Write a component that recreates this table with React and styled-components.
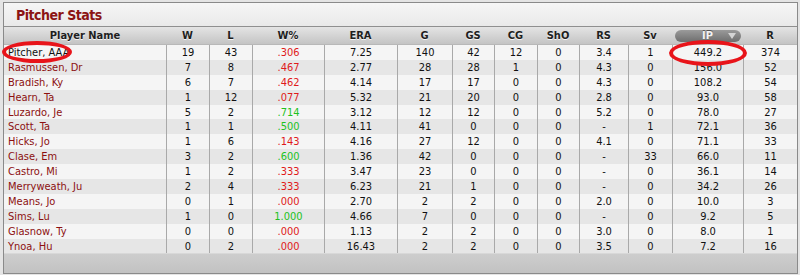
import React from 'react';
import styled, { createGlobalStyle } from 'styled-components';

const GlobalStyle = createGlobalStyle`
  html, body { margin: 0; padding: 0; background: #e4e4e4; }
  body { font-family: "DejaVu Sans Condensed", "DejaVu Sans", sans-serif; }
`;

const COLS = '162px 43px 43px 72px 73px 55px 42px 43px 42px 49px 44px 71px 54px';

const pitchers = [
  ['Pitcher, AAA', 19, 43, '.306', '7.25', 140, 42, 12, 0, '3.4', 1, '449.2', 374],
  ['Rasmussen, Dr', 7, 8, '.467', '2.77', 28, 28, 1, 0, '4.3', 0, '156.0', 52],
  ['Bradish, Ky', 6, 7, '.462', '4.14', 17, 17, 0, 0, '4.3', 0, '108.2', 54],
  ['Hearn, Ta', 1, 12, '.077', '5.32', 21, 20, 0, 0, '2.8', 0, '93.0', 58],
  ['Luzardo, Je', 5, 2, '.714', '3.12', 12, 12, 0, 0, '5.2', 0, '78.0', 27],
  ['Scott, Ta', 1, 1, '.500', '4.11', 41, 0, 0, 0, '-', 1, '72.1', 36],
  ['Hicks, Jo', 1, 6, '.143', '4.16', 27, 12, 0, 0, '4.1', 0, '71.1', 33],
  ['Clase, Em', 3, 2, '.600', '1.36', 42, 0, 0, 0, '-', 33, '66.0', 11],
  ['Castro, Mi', 1, 2, '.333', '3.47', 23, 0, 0, 0, '-', 0, '36.1', 14],
  ['Merryweath, Ju', 2, 4, '.333', '6.23', 21, 1, 0, 0, '-', 0, '34.2', 26],
  ['Means, Jo', 0, 1, '.000', '2.70', 2, 2, 0, 0, '2.0', 0, '10.0', 3],
  ['Sims, Lu', 1, 0, '1.000', '4.66', 7, 0, 0, 0, '-', 0, '9.2', 5],
  ['Glasnow, Ty', 0, 0, '.000', '1.13', 2, 2, 0, 0, '3.0', 0, '8.0', 1],
  ['Ynoa, Hu', 0, 2, '.000', '16.43', 2, 2, 0, 0, '3.5', 0, '7.2', 16],
];

const headers = ['Player Name', 'W', 'L', 'W%', 'ERA', 'G', 'GS', 'CG', 'ShO', 'RS', 'Sv', 'IP', 'R'];

const Page = styled.div`
  padding: 2px 2px 3px 3px;
`;

const Panel = styled.div`
  position: relative;
  border: 1px solid #8a8a8a;
  background: #f0f0f0;
`;

const TitleBar = styled.div`
  height: 23px;
  display: flex;
  align-items: center;
  padding-left: 12px;
  background: linear-gradient(#f6f6f6, #e9e9e9);
  border-bottom: 1px solid #8f8f8f;
`;

const Title = styled.h2`
  margin: 0;
  font-size: 14px;
  font-weight: bold;
  letter-spacing: -0.5px;
  color: #8c1414;
`;

const Grid = styled.div`
  display: grid;
  grid-template-columns: ${COLS};
`;

const HeadRow = styled(Grid)`
  height: 17px;
  background: linear-gradient(#e4e4e4, #c4c4c4);
  border-bottom: 1px solid #b8b8b8;
`;

const HeadCell = styled.div`
  display: flex;
  align-items: center;
  justify-content: center;
  font-size: 11px;
  font-weight: bold;
  color: #1e1e1e;
  text-shadow: 0 1px 0 #f4f4f4;
`;

const SortPill = styled.div`
  position: relative;
  width: 66px;
  height: 12px;
  border-radius: 6px;
  background: linear-gradient(#9a9a9a, #6e6e6e);
  display: flex;
  align-items: center;
  justify-content: center;
  color: #f2f2f2;
  text-shadow: 0 -1px 0 #555;
  &::after {
    content: '';
    position: absolute;
    right: 5px;
    top: 3px;
    border-left: 4px solid transparent;
    border-right: 4px solid transparent;
    border-top: 6px solid #d4d4d4;
  }
`;

const Row = styled(Grid)`
  height: 14.9px;
  background: ${p => (p.$odd ? '#e6e6e6' : '#f5f5f5')};
`;

const Cell = styled.div`
  display: flex;
  align-items: center;
  justify-content: ${p => (p.$left ? 'flex-start' : 'center')};
  padding-left: ${p => (p.$left ? '4px' : '0')};
  font-size: 11px;
  color: ${p => p.$color || '#111'};
  border-left: ${p => (p.$left ? 'none' : '1px solid #a9a9a9')};
  white-space: nowrap;
`;

const Footer = styled.div`
  height: 19px;
  background: linear-gradient(#cdcdcd, #c2c2c2);
  border-top: 1px solid #d8d8d8;
`;

const Ring = styled.div`
  position: absolute;
  left: ${p => p.$x}px;
  top: ${p => p.$y}px;
  width: ${p => p.$w}px;
  height: ${p => p.$h}px;
  border: 4px solid #e8141a;
  border-radius: 50%;
  box-sizing: border-box;
  pointer-events: none;
`;

const pctColor = v => (parseFloat(v) >= 0.5 ? '#1ec21e' : '#e01a1a');

export default function App() {
  return (
    <Page>
      <GlobalStyle />
      <Panel>
        <TitleBar>
          <Title>Pitcher Stats</Title>
        </TitleBar>
        <HeadRow>
          {headers.map(h => (
            <HeadCell key={h}>{h === 'IP' ? <SortPill>IP</SortPill> : h}</HeadCell>
          ))}
        </HeadRow>
        {pitchers.map((r, i) => (
          <Row key={r[0]} $odd={i % 2 === 1}>
            {r.map((v, j) => (
              <Cell
                key={j}
                $left={j === 0}
                $color={j === 0 ? (i === 0 ? '#111' : '#8c1010') : j === 3 ? pctColor(v) : undefined}
              >
                {v}
              </Cell>
            ))}
          </Row>
        ))}
        <Footer />
        <Ring $x={-2} $y={38} $w={70} $h={22} />
        <Ring $x={665} $y={37} $w={78} $h={26} />
      </Panel>
    </Page>
  );
}
